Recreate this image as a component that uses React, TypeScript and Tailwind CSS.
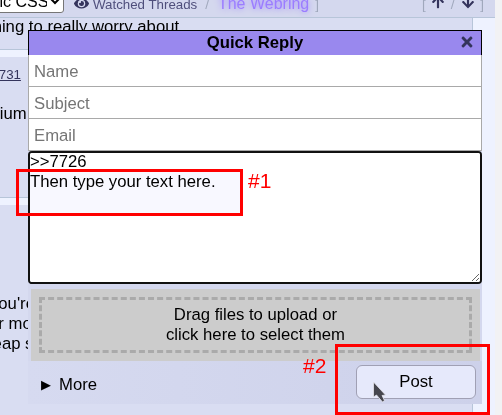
import React from 'react';
import { FaEye, FaArrowUp, FaArrowDown, FaTimes } from 'react-icons/fa';

const font = 'font-["Liberation_Sans",Arial,sans-serif]';

const TopNav = () => (
  <div className="flex h-[18px] items-start overflow-hidden border-b border-[#b7c5d9] bg-[#d4d8ee] text-[13.3px] leading-[17px] text-[#4f4f7c]">
    <select
      defaultValue="css"
      className="-mt-[11px] -ml-[50px] h-[24px] w-[114px] shrink-0 rounded-[3px] border border-[#767676] bg-white text-[16px] text-black"
    >
      <option value="css">Generic CSS</option>
    </select>
    <FaEye className="-mt-[4px] ml-[10px] shrink-0 text-[15px] text-[#34345c]" />
    <span className="ml-[4px] -mt-[4px] whitespace-nowrap">Watched Threads</span>
    <span className="ml-[8px] -mt-[4px] text-[#a0a8bc]">/</span>
    <span className="ml-[9px] -mt-[5px] text-[16px] whitespace-nowrap text-[#9b7dff] [text-shadow:0_0_6px_#9b7dff]">The Webring</span>
    <span className="ml-[6px] -mt-[4px] text-[#a0a8bc]">]</span>
    <span className="ml-[103px] -mt-[4px] text-[#a0a8bc]">[</span>
    <FaArrowUp className="ml-[5px] -mt-[5px] text-[14px] text-[#34345c]" />
    <span className="ml-[6px] -mt-[4px] text-[#a0a8bc]">/</span>
    <FaArrowDown className="ml-[7px] -mt-[5px] text-[14px] text-[#34345c]" />
    <span className="ml-[5px] -mt-[4px] text-[#a0a8bc]">]</span>
  </div>
);

const Posts = () => (
  <div className="w-[473px] text-[16.7px] leading-5 text-black">
    <div className="h-[32px] overflow-hidden border-r border-b border-[#b7c5d9] bg-[#d9ddf2] whitespace-nowrap">
      <p className="-ml-[12px] mt-[-1px]">thing to really worry about.</p>
    </div>
    <div className="mt-[7px] h-[141px] border-r border-b border-[#b7c5d9] bg-[#d9ddf2] overflow-hidden">
      <p className="mt-[8px] -ml-[9px] text-[13.3px] text-[#34345c] underline">&gt;731</p>
      <p className="mt-[19px] -ml-[30px] whitespace-nowrap">Sodium</p>
    </div>
    <div className="mt-[7px] h-[220px] border-r border-[#b7c5d9] bg-[#d9ddf2] overflow-hidden whitespace-nowrap">
      <p className="mt-[89px] -ml-[10px]">you're</p>
      <p className="-ml-[11px]">or more</p>
      <p className="-ml-[25px]">cheap s</p>
    </div>
  </div>
);

const TextField = ({ placeholder }: { placeholder: string }) => (
  <input
    placeholder={placeholder}
    className="block h-[32px] w-full border-r border-b border-l border-[#a9a9a9] bg-white pt-[2px] pl-[5px] text-[16.7px] text-black placeholder:text-[#757575] outline-none"
  />
);

const QuickReply = () => (
  <div className="absolute top-[30px] left-[28px] w-[454px]">
    <div className="relative flex h-[25px] items-center border-t border-r border-l border-black bg-[#9988ee]">
      <span className="w-full text-center text-[16.7px] font-bold leading-5 text-black">Quick Reply</span>
      <FaTimes className="absolute top-[3px] right-[6px] text-[16px] text-[#34345c]" />
    </div>
    <TextField placeholder="Name" />
    <TextField placeholder="Subject" />
    <TextField placeholder="Email" />
    <div className="bg-[#d4d8ee]">
      <div className="h-[133px] overflow-hidden rounded-[4px] border-2 border-[#111] bg-white">
        <textarea
          readOnly
          defaultValue={'>>7726\nThen type your text here.'}
          className="-mt-[1px] block h-[130px] w-full bg-white p-0 text-[16.7px] leading-5 text-black outline-none"
        />
      </div>
      <div className="pt-[5px] pr-[2px] pl-[3px]">
        <div className="bg-[#cccccc] p-[8px]">
          <div className="border-[3px] border-dashed border-[#aaaaaa] py-[5px] text-center text-[16.7px] leading-5 text-black">
            Drag files to upload or
            <br />
            click here to select them
          </div>
        </div>
      </div>
      <div className="flex h-[43px] items-center justify-between bg-gradient-to-r from-[#d6daf0] to-[#cdd1ea] pr-[6px] pl-[13px]">
        <span className="mt-[4px] flex items-center gap-[8px] text-[16.7px] text-black">
          <span className="text-[13px]">▶</span>
          More
        </span>
        <button className="-mt-[2px] h-[34px] w-[120px] rounded-[6px] border border-[#a0a0b4] bg-[#e6e9fb] text-[16.7px] text-black">
          Post
        </button>
      </div>
    </div>
  </div>
);

const Annotations = () => (
  <>
    <div className="absolute top-[169px] left-[16px] h-[47px] w-[227px] border-[3px] border-[#ff0000]">
      <div className="absolute top-0 right-0 bottom-0 left-[10px] bg-[#f8f8ff] mix-blend-multiply" />
    </div>
    <span className="absolute top-[165px] left-[248px] text-[21px] text-[#ff0000]">#1</span>
    <div className="absolute top-[344px] left-[335px] h-[71px] w-[155px] border-[3px] border-[#ff0000]" />
    <span className="absolute top-[350px] left-[303px] text-[21px] text-[#ff0000]">#2</span>
    <svg className="absolute top-[381px] left-[373px]" width="14" height="22" viewBox="0 0 14 22">
      <path d="M0.5 1 L0.5 16 L3.5 14 L9.5 21 L11.5 19.5 L9 14.5 L12.5 14 Z" fill="#46464e" stroke="#e4e4ec" strokeWidth="0.8" />
    </svg>
  </>
);

export default function App() {
  return (
    <div className={`relative flex h-[415px] w-[502px] overflow-hidden bg-[#f2f2f4] ${font}`}>
      <div className="h-full w-[495px] bg-[#eef2ff]">
        <TopNav />
        <Posts />
      </div>
      <QuickReply />
      <Annotations />
    </div>
  );
}
